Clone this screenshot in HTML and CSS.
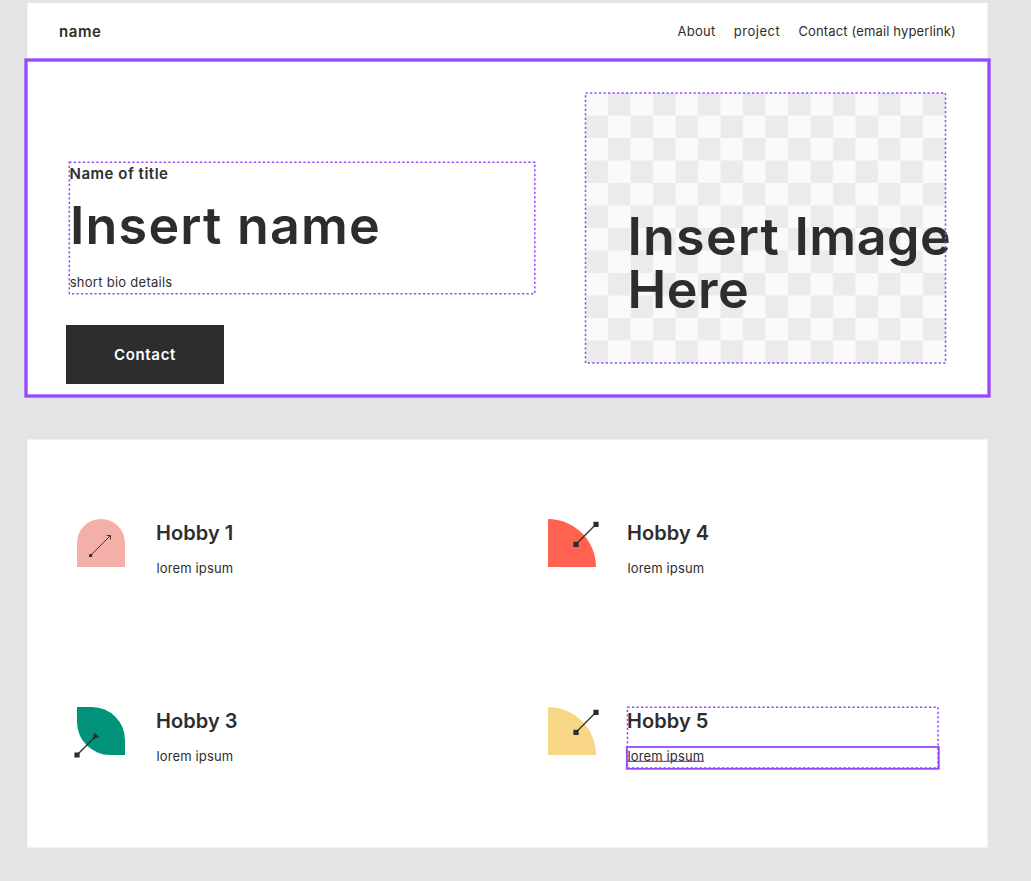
FILE: index.html
```html
<!DOCTYPE html>
<html lang="en">
<head>
<meta charset="utf-8">
<title>Portfolio wireframe</title>
<link rel="stylesheet" href="styles.css">
</head>
<body>
<header class="topbar">
  <span class="brand">name</span>
  <nav class="nav"><span class="n1">About</span><span class="n2">project</span><span class="n3">Contact (email hyperlink)</span></nav>
</header>
<section class="hero">
  <div class="intro">
    <div class="copy">
      <p class="eyebrow">Name of title</p>
      <h1 class="display">Insert name</h1>
      <p class="body-text bio">short bio details</p>
      <svg class="overlay" width="470" height="136"><rect class="dash" x="2.3" y="2.3" width="465.5" height="131.4"/></svg>
    </div>
    <div class="button">Contact</div>
  </div>
  <div class="picture">
    <svg class="overlay" width="366" height="276">
      <defs><pattern id="check" x="2.5" y="3" width="45" height="45" patternUnits="userSpaceOnUse"><rect width="45" height="45" fill="#fafafa"/><path d="M22.5 0H45V22.5H22.5V45H0V22.5H22.5Z" fill="#ebebeb"/></pattern></defs>
      <rect x="2.5" y="3" width="360" height="270" fill="url(#check)"/>
    </svg>
    <h2 class="display image-label"><span class="line"><span class="wide">Insert </span>Image</span><span class="line">Here</span></h2>
    <svg class="overlay" width="366" height="276"><rect class="dash" x="2.5" y="3" width="360" height="270"/></svg>
  </div>
  <svg class="selection" width="970" height="344"><rect x="4" y="4" width="963" height="336"/></svg>
</section>
<main class="hobbies">
  <article class="hobby">
    <svg class="icon" viewBox="0 0 48 48"><path d="M0 48V24a24 24 0 0 1 48 0v24Z" fill="#f4afa9"/><path d="M13.5 36.5 33.5 16.5M29.5 16.5h4V20.5" fill="none" stroke="#2d2d2d" stroke-width=".9"/><path d="M12.2 35h3v3h-3z" fill="#2d2d2d"/></svg>
    <div class="details"><h3>Hobby 1</h3><p class="body-text lorem">lorem ipsum</p></div>
  </article>
  <article class="hobby">
    <svg class="icon" viewBox="0 0 48 48"><path d="M0 0a48 48 0 0 1 48 48H0Z" fill="#ff6250"/><path d="M28 25.3 48 5.3" stroke="#2d2d2d" stroke-width="1.3"/><path d="M25.4 22.7h5.2v5.2h-5.2zM45.4 2.7h5.2v5.2h-5.2z" fill="#2d2d2d"/></svg>
    <div class="details"><h3>Hobby 4</h3><p class="body-text lorem">lorem ipsum</p></div>
  </article>
  <article class="hobby">
    <svg class="icon" viewBox="0 0 48 48"><path d="M0 0h15a33 33 0 0 1 33 33v15H33A33 33 0 0 1 0 15Z" fill="#009379"/><path d="M0 48 18 30" stroke="#2d2d2d" stroke-width="1.3"/><path d="M-2.6 45.4h5.2v5.2h-5.2zM17.3 25.7 22.5 29.8 15.6 32.8Z" fill="#2d2d2d"/></svg>
    <div class="details"><h3>Hobby 3</h3><p class="body-text lorem">lorem ipsum</p></div>
  </article>
  <article class="hobby">
    <svg class="icon" viewBox="0 0 48 48"><path d="M0 0a48 48 0 0 1 48 48H0Z" fill="#f7d685"/><path d="M28 25.3 48 5.3" stroke="#2d2d2d" stroke-width="1.3"/><path d="M25.4 22.7h5.2v5.2h-5.2zM45.4 2.7h5.2v5.2h-5.2z" fill="#2d2d2d"/></svg>
    <div class="details"><h3>Hobby 5</h3><p class="body-text lorem">lorem ipsum</p>
      <svg class="overlay hobby-select" width="320" height="70"><rect class="dash" x="4.5" y="3.3" width="310.5" height="60.8"/><rect class="solid" x="3.8" y="43" width="312" height="21.8"/><path class="underline" d="M4.5 57.3H81"/></svg>
    </div>
  </article>
</main>
</body>
</html>
```
FILE: styles.css
```css
* { box-sizing: border-box; }
body {
  margin: 0;
  padding: 3px 43px 33px 27px;
  width: 1031px;
  height: 881px;
  overflow: hidden;
  background: #e4e4e4;
  color: #2d2d2d;
  font-family: Inter, "Liberation Sans", sans-serif;
}
h1, h2, h3, p { margin: 0; font-weight: 600; white-space: nowrap; }
.topbar {
  display: flex;
  justify-content: space-between;
  height: 57px;
  padding: 18px 31px 0;
  background: #fff;
  border: solid #f2f2f2;
  border-width: 0 1px;
  line-height: 20px;
}
.brand { padding-top: 1px; font-size: 15px; font-weight: 600; letter-spacing: .6px; }
.nav { display: flex; gap: 18.3px; font-size: 13px; font-weight: 400; }
.n1 { letter-spacing: .25px; }
.n2 { letter-spacing: .5px; }
.n3 { letter-spacing: .14px; }
.hero {
  position: relative;
  display: flex;
  justify-content: space-between;
  height: 336px;
  padding: 30px 39px 0 39px;
  background: #fff;
}
.intro { padding-top: 70px; }
.copy { position: relative; width: 470px; height: 136px; padding: 4px 0 0 2px; margin-left: 1px; }
.eyebrow { padding-left: .5px; font-size: 15px; line-height: 20px; letter-spacing: .52px; }
.display { font-size: 52px; line-height: 53px; }
h1.display { padding: 15px 0 0 1px; height: 83px; letter-spacing: 1.2px; }
.body-text { font-size: 13px; font-weight: 400; line-height: 20px; }
.bio { padding-left: .7px; margin-top: 5px; letter-spacing: .27px; }
.overlay { position: absolute; left: 0; top: 0; overflow: visible; pointer-events: none; }
.dash { fill: none; stroke: #9747ff; stroke-width: 1.5; stroke-dasharray: 2.25; }
.solid { fill: none; stroke: #9747ff; stroke-width: 1.8; }
.underline { fill: none; stroke: #7c45c4; stroke-width: 1.2; }
.button {
  display: flex;
  align-items: center;
  justify-content: center;
  width: 158px;
  height: 59px;
  margin-top: 29px;
  background: #2d2d2d;
  color: #fff;
  font-size: 15px;
  font-weight: 600;
  letter-spacing: .65px;
}
.picture { position: relative; width: 366px; height: 276px; }
.image-label { position: relative; padding: 121px 0 0 44.5px; letter-spacing: .5px; }
.line { display: block; line-height: 52.5px; }
.wide { letter-spacing: 1.2px; }
.selection { position: absolute; left: -5px; top: -4px; overflow: visible; }
.selection rect { fill: none; stroke: #9747ff; stroke-width: 3.3; }
.hobbies {
  display: grid;
  grid-template-columns: 471px 1fr;
  grid-template-rows: 188.3px 1fr;
  margin-top: 43px;
  height: 409px;
  padding: 79px 48px 0 49px;
  background: #fff;
  border: 1px solid #f2f2f2;
}
.hobby { display: flex; gap: 31px; }
.icon { width: 48px; height: 48px; overflow: visible; }
.details { position: relative; }
h3 { font-size: 20px; line-height: 28px; letter-spacing: .06px; }
.lorem { padding-left: .5px; margin-top: 11px; letter-spacing: .13px; }
.hobby-select { left: -4px; top: -3px; }
```
